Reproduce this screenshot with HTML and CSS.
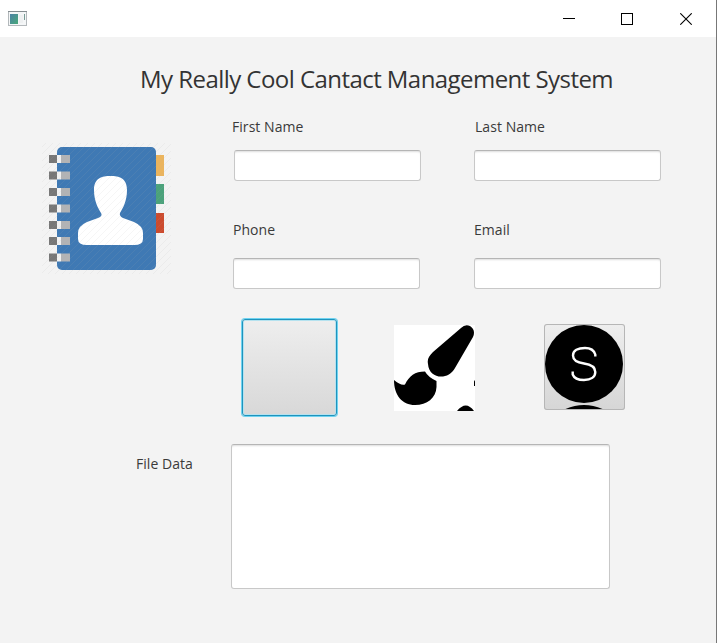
FILE: index.html
```html
<!DOCTYPE html>
<html lang="en">
<head>
<meta charset="utf-8">
<title>Contacts</title>
<link rel="stylesheet" href="styles.css">
</head>
<body>
<div class="window">
  <header class="titlebar">
    <svg class="app-icon" width="20" height="16" viewBox="0 0 20 16">
      <defs><linearGradient id="screen" x1="0" y1="0" x2="1" y2="1"><stop offset="0" stop-color="#4b82a5"/><stop offset="1" stop-color="#48a879"/></linearGradient></defs>
      <rect x=".5" y=".5" width="18" height="14" fill="#f4f6f7" stroke="#b3b8bb"/>
      <path d="M0 .5H19" stroke="#858d91"/>
      <rect x="2" y="3" width="8" height="10" fill="url(#screen)"/>
      <path d="M12 4v8M14 4v8" stroke="#e8eaeb"/>
      <path d="M16.500 3v6" stroke="#789b95"/>
    </svg>
    <div class="controls">
      <svg width="12" height="12" viewBox="0 0 12 12"><path d="M0 5.500H12" stroke="#000"/></svg>
      <svg width="12" height="12" viewBox="0 0 12 12"><rect x=".5" y=".5" width="11" height="11" fill="none" stroke="#000"/></svg>
      <svg width="12" height="12" viewBox="0 0 12 12"><path d="M.3 .3L11.700 11.700M11.700 .3L.3 11.700" stroke="#000" stroke-width="1.100"/></svg>
    </div>
  </header>
  <main>
    <h1>My Really Cool Cantact Management System</h1>
    <div class="body">
      <svg class="book" width="129" height="131" viewBox="42 143 129 131">
        <defs><pattern id="hatch" width="7" height="7" patternUnits="userSpaceOnUse"><path d="M-1 8L8 -1" stroke="#aaa" stroke-opacity=".16" stroke-width=".7"/></pattern></defs>
        <rect x="155" y="155" width="9" height="21" fill="#ebb45d"/>
        <rect x="155" y="184" width="9" height="20" fill="#4ba27b"/>
        <rect x="155" y="213" width="9" height="20" fill="#cc4b2e"/>
        <rect x="57" y="147" width="99" height="123" rx="5" fill="#3f79b4"/>
        <g>
          <path d="M49 159H57M49 175.500H57M49 192H57M49 208.500H57M49 225H57M49 241H57M49 257.500H57" stroke="#777" stroke-width="8"/>
          <path d="M57 159H61M57 175.500H61M57 192H61M57 208.500H61M57 225H61M57 241H61M57 257.500H61" stroke="#f1f1f1" stroke-width="8"/>
          <path d="M61 159H70M61 175.500H70M61 192H70M61 208.500H70M61 225H70M61 241H70M61 257.500H70" stroke="#b2b3b5" stroke-width="8"/>
        </g>
        <path d="M110.500 176C119 176 127 178 127 190C127 201 123 208 120 213Q119 216 123 218L134 222Q143 226 143 233V239Q143 245 134 245H87Q78 245 78 239V233Q78 226 87 222L98 218Q103 216 101 213C98 208 94 201 94 190C94 178 102 176 110.500 176Z" fill="#fff"/>
        <rect x="42" y="143" width="129" height="131" fill="url(#hatch)"/>
      </svg>
      <form class="form">
        <div class="fields">
          <label class="field first"><span>First Name</span><input type="text"></label>
          <label class="field last"><span>Last Name</span><input type="text"></label>
          <label class="field phone"><span>Phone</span><input type="text"></label>
          <label class="field email"><span>Email</span><input type="text"></label>
        </div>
        <div class="actions">
          <button class="plain" type="button" aria-label="New"></button>
          <button class="brush" type="button" aria-label="Draw">
            <svg width="81" height="86" viewBox="394 325 81 86">
              <path d="M461 328Q465 324 470 326Q476 330 473 337L455 368C448 381 429 379 428 364C427 359 429 356 433 352Z"/>
              <path d="M394 380Q401 386 405 384.500C409 376 415 371.500 425 371.500Q428 377 436.500 381V387C436 398 427 405 415 405C402 405 394 395 394 380Z"/>
              <path d="M474 380Q476 382 475 386H474ZM457 411Q466 400 474 411Z"/>
            </svg>
          </button>
          <button class="skype" type="button" aria-label="S">
            <svg width="81" height="86" viewBox="544 324 81 86">
              <circle cx="584" cy="364" r="39"/>
              <path d="M565.500 409Q584 401 602.500 409Z"/>
              <path d="M595.300 356.500V354.500C594 350 590 348 585 348C578 348 573 350.500 573 355.500C573 360 577 362.500 584 363.500C591 364.500 595.300 367 595.300 372C595.300 377 591 380 584 380C578 380 574 378 572.700 374.500V371.500" fill="none" stroke="#fff" stroke-width="2.400" stroke-linejoin="round"/>
            </svg>
          </button>
        </div>
      </form>
    </div>
    <div class="file">
      <label for="data">File Data</label>
      <textarea id="data"></textarea>
    </div>
  </main>
</div>
</body>
</html>
```
FILE: styles.css
```css
* { box-sizing: border-box; }
body { margin: 0; overflow: hidden; background: #f3f3f3; }
.window {
  width: 717px; height: 643px; border-right: 1px solid #777;
  font: 14px/20px "Open Sans", "Noto Sans", sans-serif; color: #3a3a3a;
}
.titlebar {
  height: 37px; padding: 0 24px 0 8px; background: #fff;
  display: flex; align-items: center; justify-content: space-between;
}
.controls { display: flex; gap: 47px; }
.controls svg:first-child { margin-right: -1px; }
svg { display: block; }
h1 {
  margin: 0; padding: 26px 0 0 140px; height: 80px; color: #333;
  font-size: 24px; line-height: 32px; font-weight: 400; white-space: nowrap;
  letter-spacing: -.55px;
}
.body { display: flex; height: 327px; }
.book { margin: 26px 60px 0 42px; flex: none; }
.fields {
  display: grid; grid-template-columns: 242px 190px;
  grid-template-rows: 103px 99px;
}
.field { display: flex; flex-direction: column; letter-spacing: .05px; }
.field span { height: 33px; padding-left: 1px; }
.field.phone span, .field.email span { height: 38px; }
.last span { margin-left: 1px; }
.phone span { margin-left: 1px; }
.field input { width: 187px; height: 31px; margin-left: 1px; }
.field.first input { margin-left: 3px; }
.field.phone input { margin-left: 2px; }
input, textarea {
  background: #fff; border: 1px solid #c8c8c8; border-top-color: #b5b5b5;
  border-radius: 3px; outline: none; padding: 4px 7px; font: inherit;
  box-shadow: inset 0 2px 2px -1px #ddd;
}
.actions { display: flex; align-items: flex-start; padding-left: 11px; }
button { padding: 0; border: 0; flex: none; }
.plain {
  width: 95px; height: 97px; border: 1px solid #1f93bd; border-radius: 3px;
  background: linear-gradient(#eee, #d8d8d8);
  box-shadow: 0 0 0 1px #6fd3f0, inset 0 0 0 1px #b5e2ef;
}
.brush { width: 81px; height: 86px; margin: 6px 0 0 57px; background: #fff; }
.skype {
  width: 81px; height: 86px; margin: 5px 0 0 69px; border-radius: 3px;
  background: linear-gradient(#eee, #d6d6d6); box-shadow: inset 0 0 0 1px #b6b6b6;
}
.file { display: flex; padding-left: 136px; }
.file label { width: 95px; padding-top: 10px; letter-spacing: .05px; }
.file textarea { width: 379px; height: 145px; resize: none; }
```
